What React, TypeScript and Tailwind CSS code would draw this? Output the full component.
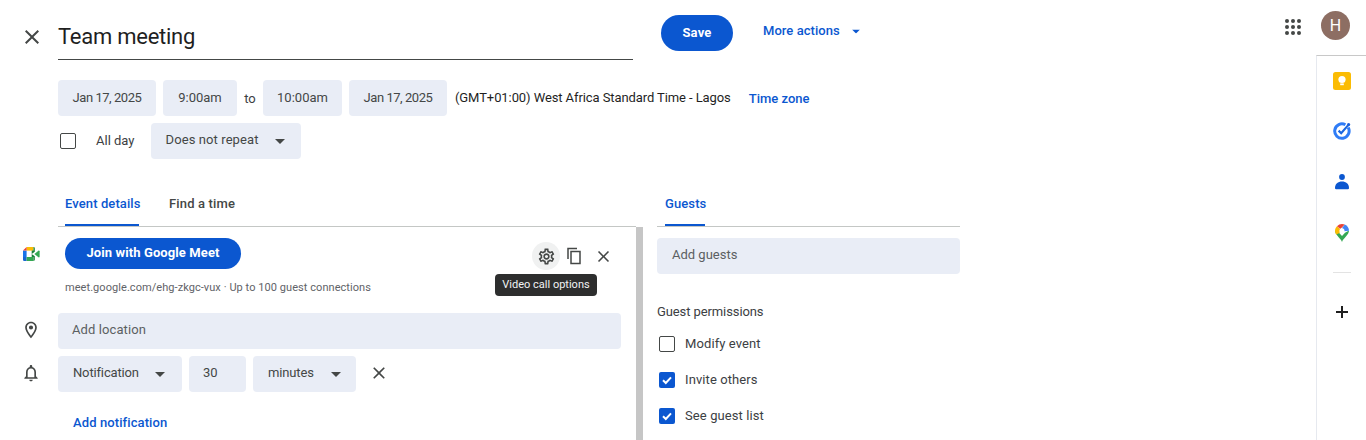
import React from "react";

const P = ({ d, size = 24, cls = "" }: { d: string; size?: number; cls?: string }) => (
  <svg width={size} height={size} viewBox="0 0 24 24" fill="currentColor" className={cls}>
    <path d={d} />
  </svg>
);

const CLOSE = "M19 6.41L17.59 5 12 10.59 6.41 5 5 6.41 10.59 12 5 17.59 6.41 19 12 13.41 17.59 19 19 17.59 13.41 12z";
const GEAR = "M19.43 12.98c.04-.32.07-.64.07-.98 0-.34-.03-.66-.07-.98l2.11-1.65c.19-.15.24-.42.12-.64l-2-3.46c-.09-.16-.26-.25-.44-.25-.06 0-.12.01-.17.03l-2.49 1c-.52-.4-1.08-.73-1.69-.98l-.38-2.65C14.46 2.18 14.25 2 14 2h-4c-.25 0-.46.18-.49.42l-.38 2.65c-.61.25-1.17.59-1.69.98l-2.49-1c-.06-.02-.12-.03-.18-.03-.17 0-.34.09-.43.25l-2 3.46c-.13.22-.07.49.12.64l2.11 1.65c-.04.32-.07.65-.07.98 0 .33.03.66.07.98l-2.11 1.65c-.19.15-.24.42-.12.64l2 3.46c.09.16.26.25.44.25.06 0 .12-.01.17-.03l2.49-1c.52.4 1.08.73 1.69.98l.38 2.65c.03.24.24.42.49.42h4c.25 0 .46-.18.49-.42l.38-2.65c.61-.25 1.17-.59 1.69-.98l2.49 1c.06.02.12.03.18.03.17 0 .34-.09.43-.25l2-3.46c.12-.22.07-.49-.12-.64l-2.11-1.65zm-1.98-1.71c.04.31.05.52.05.73 0 .21-.02.43-.05.73l-.14 1.13.89.7 1.08.84-.7 1.21-1.27-.51-1.04-.42-.9.68c-.43.32-.84.56-1.25.73l-1.06.43-.16 1.13-.2 1.35h-1.4l-.19-1.35-.16-1.13-1.06-.43c-.43-.18-.83-.41-1.23-.71l-.91-.7-1.06.43-1.27.51-.7-1.21 1.08-.84.89-.7-.14-1.13c-.03-.31-.05-.54-.05-.74s.02-.43.05-.73l.14-1.13-.89-.7-1.08-.84.7-1.21 1.27.51 1.04.42.9-.68c.43-.32.84-.56 1.25-.73l1.06-.43.16-1.13.2-1.35h1.39l.19 1.35.16 1.13 1.06.43c.43.18.83.41 1.23.71l.91.7 1.06-.43 1.27-.51.7 1.21-1.07.85-.89.7.14 1.13zM12 8c-2.21 0-4 1.79-4 4s1.79 4 4 4 4-1.79 4-4-1.79-4-4-4zm0 6c-1.1 0-2-.9-2-2s.9-2 2-2 2 .9 2 2-.9 2-2 2z";
const COPY = "M16 1H3v15h2V3h11V1zm5 4H7v18h14V5zm-2 16H9V7h10v14z";
const PLACE = "M12 2C8.13 2 5 5.13 5 9c0 5.25 7 13 7 13s7-7.75 7-13c0-3.87-3.13-7-7-7zM7 9c0-2.76 2.24-5 5-5s5 2.24 5 5c0 2.88-2.88 7.19-5 9.88C9.92 16.21 7 11.85 7 9zm5-2.5a2.5 2.5 0 1 0 0 5 2.5 2.5 0 0 0 0-5z";
const BELL = "M12 22c1.1 0 2-.9 2-2h-4c0 1.1.9 2 2 2zm6-6v-5c0-3.07-1.63-5.64-4.5-6.32V4c0-.83-.67-1.5-1.5-1.5s-1.5.67-1.5 1.5v.68C7.64 5.36 6 7.92 6 11v5l-2 2v1h16v-1l-2-2zm-2 1H8v-6c0-2.48 1.51-4.5 4-4.5s4 2.02 4 4.5v6z";

const Caret = ({ cls = "text-[#444746]" }: { cls?: string }) => (
  <svg width="10" height="5" viewBox="0 0 10 5" fill="currentColor" className={cls}>
    <path d="M0 0h10L5 5z" />
  </svg>
);

const Pill = ({ w, children, cls = "justify-center" }: { w: string; children: React.ReactNode; cls?: string }) => (
  <div className={`${w} ${cls} h-9 flex items-center rounded-[4px] bg-[#e9edf6] text-[13px] text-[#444746]`}>
    {children}
  </div>
);

const Check = ({ on }: { on: boolean }) =>
  on ? (
    <div className="w-4 h-4 rounded-[2px] bg-[#0b57d0] flex items-center justify-center">
      <svg width="12" height="12" viewBox="0 0 12 12" fill="none" stroke="white" strokeWidth="2">
        <path d="M2 6.3l2.8 2.7L10 3.4" />
      </svg>
    </div>
  ) : (
    <div className="w-4 h-4 rounded-[2px] border-[1.5px] border-[#444746]" />
  );

const Perm = ({ on, label }: { on: boolean; label: string }) => (
  <div className="h-9 flex items-center pl-[2px] gap-[10px] text-[13px] tracking-[0.1px] text-[#3c4043]">
    <Check on={on} />
    <span>{label}</span>
  </div>
);

export default function App() {
  return (
    <div className="flex h-[440px] w-[1366px] overflow-hidden bg-white text-[#1f1f1f] font-['Roboto','Liberation_Sans',sans-serif]">
      <div className="w-[1280px] shrink-0 flex flex-col">
        {/* Header */}
        <div className="flex h-[80px] shrink-0">
          <div className="w-[58px] h-[60px] flex items-center justify-start pl-[20px] pt-[14px] text-[#444746]">
            <P d={CLOSE} />
          </div>
          <div className="w-[575px] h-[60px] border-b border-[#444746] flex items-center pt-[13px] text-[22px] tracking-[-0.25px] text-[#1f1f1f]">
            Team meeting
          </div>
          <div className="ml-[28px] mt-[15px] w-[72px] h-9 rounded-full bg-[#0b57d0] text-white text-[13px] font-bold tracking-[0.2px] flex items-center justify-center">
            Save
          </div>
          <div className="ml-[30px] mt-[22px] h-[18px] flex items-center text-[#0b57d0] text-[13px] font-medium tracking-[0.05px]">
            More actions
            <Caret cls="ml-[11px] text-[#0b57d0] scale-[0.8]" />
          </div>
        </div>

        {/* Date row */}
        <div className="flex items-center h-9 pl-[58px] shrink-0">
          <Pill w="w-[98px]"><span className="tracking-[-0.45px]">Jan 17, 2025</span></Pill>
          <Pill w="w-[74px] ml-[7px]">9:00am</Pill>
          <span className="w-[26px] text-center text-[13px] text-[#3c4043] pt-[1px]">to</span>
          <Pill w="w-[79px]">10:00am</Pill>
          <Pill w="w-[98px] ml-[7px]"><span className="tracking-[-0.45px]">Jan 17, 2025</span></Pill>
          <span className="ml-[8px] text-[13px] tracking-[-0.09px] text-[#1f1f1f]">(GMT+01:00) West Africa Standard Time - Lagos</span>
          <span className="ml-[18px] text-[13px] font-medium text-[#0b57d0] pt-[1px]">Time zone</span>
        </div>

        {/* All day row */}
        <div className="flex items-center h-9 mt-[7px] pl-[60px] shrink-0">
          <Check on={false} />
          <span className="ml-[20px] text-[13px] text-[#3c4043]">All day</span>
          <Pill w="w-[150px] ml-[16px] pl-[15px] pb-[2px]" cls="justify-start">
            <span className="tracking-[0.1px]">Does not repeat</span>
            <Caret cls="ml-[16px] mt-[2px] text-[#444746]" />
          </Pill>
        </div>

        {/* Body */}
        <div className="flex mt-[32px] flex-1 min-h-0">
          <div className="w-[643px] shrink-0 flex flex-col min-h-0">
            {/* Tabs */}
            <div className="ml-[58px] w-[578px] h-[36px] shrink-0 border-b border-[#c4c7c5] flex items-start text-[13px] tracking-[0.1px] font-medium">
              <div className="ml-[7px] w-[74px] h-[35px] border-b-[2px] border-[#0b57d0] text-[#0b57d0] pt-[3px] whitespace-nowrap">Event details</div>
              <div className="ml-[30px] pt-[3px] text-[#444746] tracking-[0.15px]">Find a time</div>
            </div>
            <div className="flex flex-1 min-h-0">
              <div className="w-[636px] flex flex-col">
                {/* Meet */}
                <div className="flex items-start h-[75px] pt-[11px] shrink-0">
                  <div className="w-[65px] h-[31px] flex items-center pl-[23px] shrink-0">
                    <svg width="17" height="14" viewBox="0 0 17 14">
                      <path d="M3.6 0H10.5v3.6H3.6z" fill="#fbbc04" />
                      <path d="M0 3.6h3.6v6.4H0z" fill="#1a73e8" />
                      <path d="M3.6 0v3.6H0z" fill="#ea4335" />
                      <path d="M0 10h3.6v4H1.2A1.2 1.2 0 0 1 0 12.8z" fill="#1967d2" />
                      <path d="M3.6 10H10.5v4H3.6z" fill="#34a853" />
                      <path d="M10.5 0c.7 0 1.3.5 1.3 1.2v3.6L8.7 7l3.1 2.3v3.5c0 .7-.6 1.2-1.3 1.2V10h-1.8V3.6h1.8z" fill="#188038" />
                      <path d="M11.4 7l4-3.3c.5-.4 1.2 0 1.2.6v5.4c0 .6-.7 1-1.2.6z" fill="#34a853" />
                    </svg>
                  </div>
                  <div className="flex-1 flex flex-col min-w-0">
                    <div className="flex items-start justify-between">
                      <div className="w-[176px] h-[31px] pb-[2px] rounded-full bg-[#0b57d0] text-white text-[13px] font-bold tracking-[0.1px] flex items-center justify-center">
                        Join with Google Meet
                      </div>
                      <div className="relative flex items-center mt-[4px] mr-[19px]">
                        <div className="w-7 h-7 rounded-full bg-[#f0f1f1] flex items-center justify-center text-[#444746]">
                          <P d={GEAR} size={19} />
                        </div>
                        <div className="w-7 h-7 flex items-center justify-center text-[#444746]">
                          <P d={COPY} size={18} />
                        </div>
                        <div className="w-7 h-7 flex items-center justify-center ml-[1px] text-[#444746]">
                          <P d={CLOSE} size={19} />
                        </div>
                        <div className="absolute left-[-37px] top-[32px] w-[102px] h-[22px] rounded-[4px] bg-[#2d2e2e] text-[#f1f3f4] text-[11px] flex items-center justify-center whitespace-nowrap">
                          Video call options
                        </div>
                      </div>
                    </div>
                    <div className="mt-[11px] text-[11px] leading-[14px] tracking-[0.06px] text-[#5f6368]">
                      meet.google.com/ehg-zkgc-vux · Up to 100 guest connections
                    </div>
                  </div>
                </div>
                {/* Location */}
                <div className="flex h-9 items-center shrink-0 mt-[11px]">
                  <div className="w-[58px] flex justify-start pl-[21px] pb-[2px] text-[#444746]">
                    <P d={PLACE} size={20} />
                  </div>
                  <Pill w="w-[563px] pl-[14px] pb-[2px]" cls="justify-start"><span className="tracking-[0.1px] text-[#5b5f62]">Add location</span></Pill>
                </div>
                {/* Notification */}
                <div className="flex h-9 items-center shrink-0 mt-[7px]">
                  <div className="w-[58px] flex pl-[21px] pb-[2px] text-[#444746]">
                    <P d={BELL} size={20} />
                  </div>
                  <Pill w="w-[124px] pl-[15px] pb-[2px]" cls="justify-start">
                    <span className="tracking-[-0.15px]">Notification</span>
                    <Caret cls="ml-[16px] mt-[2px] text-[#444746]" />
                  </Pill>
                  <Pill w="w-[57px] ml-[7px] pl-[14px] pb-[2px]" cls="justify-start">30</Pill>
                  <Pill w="w-[103px] ml-[7px] pl-[15px] pb-[2px]" cls="justify-start">
                    <span className="tracking-[-0.15px]">minutes</span>
                    <Caret cls="ml-[17px] mt-[2px] text-[#444746]" />
                  </Pill>
                  <div className="ml-[13px] pb-[3px] text-[#444746]"><P d={CLOSE} size={20} /></div>
                </div>
                <div className="ml-[73px] mt-[21px] text-[13px] font-medium tracking-[0.1px] text-[#0b57d0]">Add notification</div>
              </div>
              <div className="w-[7px] bg-[#c6c6c6] shrink-0" />
            </div>
          </div>

          {/* Guests */}
          <div className="ml-[14px] w-[303px] flex flex-col">
            <div className="h-[36px] shrink-0 border-b border-[#c4c7c5] text-[13px] tracking-[0.1px] font-medium">
              <div className="ml-[8px] w-[40px] h-[35px] border-b-[2px] border-[#0b57d0] text-[#0b57d0] pt-[3px]">Guests</div>
            </div>
            <div className="mt-[11px]">
              <Pill w="w-full pl-[15px] pb-[2px]" cls="justify-start"><span className="text-[#5b5f62]">Add guests</span></Pill>
            </div>
            <div className="mt-[30px] text-[13px] leading-[16px] tracking-[-0.1px] text-[#3c4043]">Guest permissions</div>
            <div className="mt-[6px]">
              <Perm on={false} label="Modify event" />
              <Perm on={true} label="Invite others" />
              <Perm on={true} label="See guest list" />
            </div>
          </div>
        </div>
      </div>

      {/* Right */}
      <div className="w-[86px] shrink-0 flex flex-col items-end">
        <div className="h-[55px] w-full flex items-start shrink-0">
          <div className="mt-[19px] ml-[5px] grid grid-cols-3 gap-[2.5px]">
            {Array.from({ length: 9 }).map((_, i) => (
              <div key={i} className="w-[3.5px] h-[3.5px] rounded-full bg-[#444746]" />
            ))}
          </div>
          <div className="ml-[20.5px] mt-[11px] w-[29px] h-[29px] rounded-full bg-[#8d6e63] text-white text-[16px] flex items-center justify-center">
            H
          </div>
        </div>
        <div className="w-[50px] flex-1 border-l border-t border-l-[#e6e9ef] border-t-[#c8c8c8] flex flex-col items-center pt-[16px] text-[#1f1f1f]">
          <svg width="18" height="18" viewBox="0 0 18 18">
            <rect width="18" height="18" rx="2.5" fill="#fbbc04" />
            <circle cx="9" cy="7.5" r="3.6" fill="#fff" />
            <rect x="7.2" y="11.4" width="3.6" height="1.8" fill="#fff" />
          </svg>
          <svg width="18" height="18" viewBox="0 0 18 18" className="mt-[32px]" fill="none">
            <path d="M15.2 5.6A7.2 7.2 0 1 1 12.4 2.8" stroke="#2f7cf6" strokeWidth="3" />
            <path d="M5.6 8.6l2.6 2.6L15 3.4" stroke="#1a66e0" strokeWidth="2.2" />
            <circle cx="15.6" cy="2.6" r="1.6" fill="#1a5fd8" />
          </svg>
          <svg width="14" height="16" viewBox="0 0 14 16" className="mt-[34px]">
            <circle cx="7" cy="3" r="2.9" fill="#0b57d0" />
            <path d="M1 15.2c-.8 0-1-.6-1-1.2C0 10 3 7.6 7 7.6S14 10 14 14c0 .6-.2 1.2-1 1.2z" fill="#0b57d0" />
          </svg>
          <svg width="14" height="18" viewBox="0 0 14 18" className="mt-[34px]">
            <path d="M7 18C5.8 14.5 0 11 0 6.6L4 8.7 7 12l3-3.3 4-2.1C14 11 8.2 14.5 7 18z" fill="#34a853" />
            <path d="M0 6.8C0 5 .8 3.4 2 2.2L5 5 4.6 8.9 1.2 10.6C.5 9.5 0 8.2 0 6.8z" fill="#fbbc04" />
            <path d="M2 2.2A7 7 0 0 1 7 0c1 0 2 .2 2.8.6L5.4 5z" fill="#ea4335" />
            <path d="M9.8.6C12.3 1.7 14 4 14 6.8L9 7.2 7 4z" fill="#4285f4" />
            <circle cx="7" cy="6.7" r="2.5" fill="#fff" />
          </svg>
          <div className="mt-[30px] w-[18px] h-px bg-[#e3e3e3]" />
          <div className="mt-[32px] text-[#1f1f1f]">
            <svg width="14" height="14" viewBox="0 0 14 14" fill="currentColor">
              <path d="M6 1h2v5h5v2H8v5H6V8H1V6h5z" />
            </svg>
          </div>
        </div>
      </div>
    </div>
  );
}
